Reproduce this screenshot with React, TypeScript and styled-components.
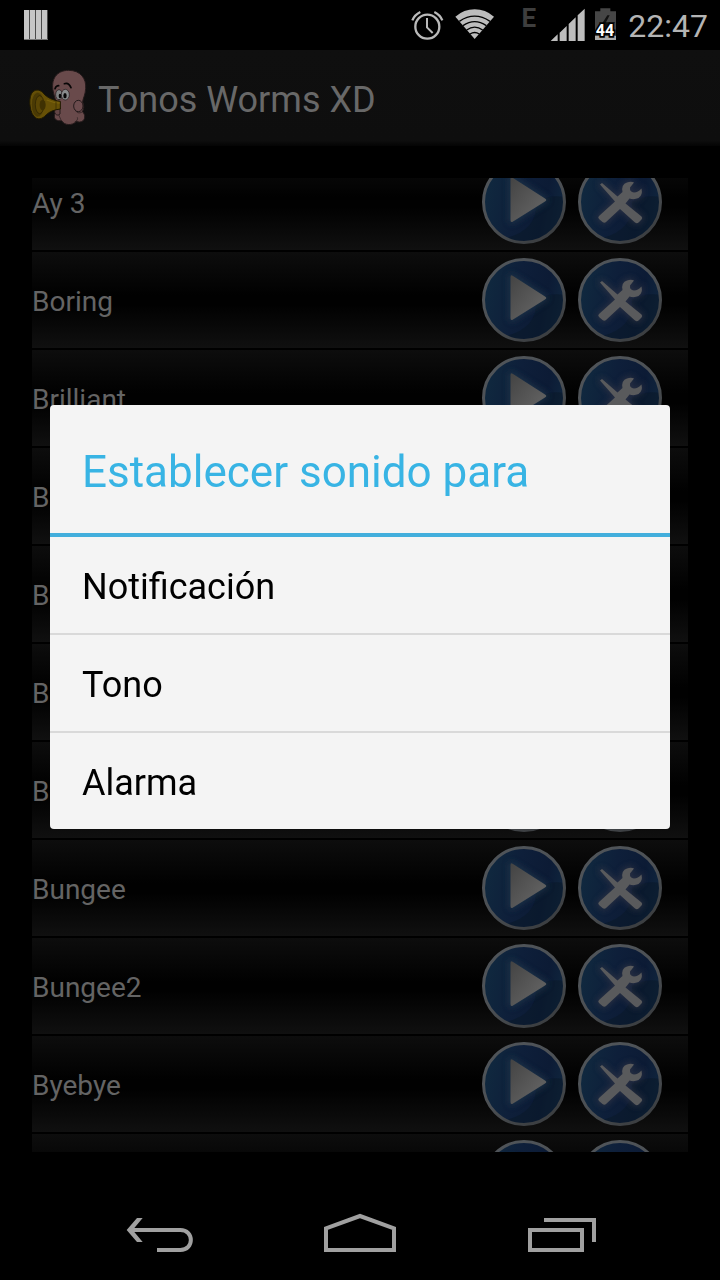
import React from "react";
import styled, { createGlobalStyle } from "styled-components";

const GlobalStyle = createGlobalStyle`
  *, *::before, *::after { box-sizing: border-box; }
  body { margin: 0; background: #000; }
  button { margin: 0; padding: 0; border: 0; background: none; font: inherit; color: inherit; cursor: pointer; }
  svg { display: block; }
`;

const Screen = styled.div`
  height: 100vh;
  display: flex;
  flex-direction: column;
  background: #000;
  font-family: Roboto, "Liberation Sans", sans-serif;
`;

const StatusBar = styled.header`
  height: 50px;
  flex: none;
  display: flex;
  gap: 10px;
  padding: 0 12px 0 24px;
  color: #b4b4b4;
`;

const Spacer = styled.div`
  flex: 1;
`;

const NetworkType = styled.span`
  width: 36px;
  padding-right: 4px;
  text-align: right;
  font-size: 26px;
  font-weight: 700;
  line-height: 36px;
  color: #3e3e3e;
`;

const Clock = styled.time`
  width: 82px;
  text-align: right;
  font-size: 32px;
  line-height: 52px;
`;

const ActionBar = styled.div`
  height: 96px;
  flex: none;
  display: flex;
  align-items: center;
  gap: 8px;
  padding: 0 26px;
  background: linear-gradient(#0f0f0f, #0e0e0e 94%, #040404);
`;

const AppTitle = styled.h1`
  margin: 0;
  padding-top: 4px;
  font-size: 36px;
  font-weight: 400;
  line-height: 48px;
  color: #686868;
`;

const Content = styled.main`
  flex: 1;
  min-height: 0;
  display: flex;
  padding: 32px;
`;

const ListViewport = styled.div`
  flex: 1;
  overflow: hidden;
`;

const SoundList = styled.ul`
  list-style: none;
  margin: -24px 0 0;
  padding: 0;
`;

const SoundRow = styled.li`
  height: 98px;
  display: flex;
  align-items: center;
  padding-right: 20px;
  border-bottom: 2px solid #000;
  background: linear-gradient(#0d0d0d, #010101 45%, #010101 55%, #101010);
`;

const SoundName = styled.span`
  flex: 1;
  padding-top: 4px;
  font-size: 28px;
  line-height: 36px;
  color: #646464;
`;

const RoundButton = styled.button`
  width: 96px;
  height: 96px;
`;

const DialogLayer = styled.div`
  position: fixed;
  inset: 50px 0 96px;
  display: flex;
  align-items: center;
  padding: 0 50px;
`;

const Dialog = styled.section`
  flex: 1;
  overflow: hidden;
  border-radius: 4px;
  background: #f4f4f4;
`;

const DialogTitle = styled.h2`
  margin: 0;
  padding: 36px 32px 30px;
  border-bottom: 4px solid #42aedc;
  font-size: 44px;
  font-weight: 400;
  line-height: 62px;
  color: #38b4e4;
`;

const Option = styled.button`
  display: block;
  width: 100%;
  padding: 26px 32px 22px;
  text-align: left;
  font-size: 36px;
  line-height: 48px;
  color: #000;

  & + & {
    border-top: 2px solid #d9d9d9;
  }
`;

const NavBar = styled.nav`
  height: 96px;
  flex: none;
  display: flex;
  padding: 0 60px;
`;

const NavButton = styled.button`
  flex: 1;
  display: flex;
  align-items: center;
  justify-content: center;
`;

const BarcodeIcon = () => (
  <svg width="24" height="50" viewBox="0 0 24 50" aria-hidden="true">
    {[0, 6, 12, 18].map((x) => (
      <g key={x}>
        <rect x={x} y="10" width="6" height="30" fill="#777" />
        <rect x={x} y="10" width="5" height="29" fill="#c6c6c6" />
        <rect x={x + 5} y="10" width="1" height="29" fill="#4a4a4a" />
      </g>
    ))}
  </svg>
);

const AlarmIcon = () => (
  <svg width="34" height="50" viewBox="33 0 102 150" fill="none" stroke="#b9b9b9" aria-hidden="true">
    <circle cx="82" cy="80" r="36" strokeWidth="7" />
    <path d="M81 54V82L98 99" strokeWidth="6" />
    <path d="M37 61Q44 44 61 36M103 36Q120 44 127 61" strokeWidth="7" />
  </svg>
);

const WifiIcon = () => (
  <svg width="39" height="50" viewBox="165 0 117 150" aria-hidden="true">
    <path d="M224 117L166 50Q192 28 224 28T282 50Z" fill="#bdbdbd" />
    <g fill="none" stroke="#000" strokeWidth="4">
      <path d="M178 64Q224 33 270 64" />
      <path d="M189 77Q224 53 259 77" />
      <path d="M200 90Q224 73 248 90" />
      <path d="M210 102Q224 93 238 102" />
    </g>
  </svg>
);

const SignalIcon = () => (
  <svg width="35" height="50" viewBox="451 0 105 150" fill="#bdbdbd" aria-hidden="true">
    <path d="M453 123L474 103V123ZM480 98L501 78V123H480ZM507 72L528 52V123H507ZM534 46L555 26V123H534Z" />
  </svg>
);

const BatteryIcon = () => (
  <svg width="21" height="50" viewBox="585 0 63 150" role="img" aria-label="44 %">
    <path d="M601 25H631V34H648V120H585V34H601Z" fill="#464646" />
    <path d="M585 108H648V120H585Z" fill="#a9a9a9" />
    <path d="M622 46L603 76H615L608 100L631 67H618L629 46Z" fill="#111" />
    <text
      x="615"
      y="108"
      textAnchor="middle"
      fontFamily="Roboto, sans-serif"
      fontWeight="700"
      fontSize="48"
      fill="#fff"
      stroke="#000"
      strokeWidth="10"
      paintOrder="stroke"
    >
      44
    </text>
  </svg>
);

const WormIcon = () => (
  <svg width="64" height="64" viewBox="18 18 192 192" aria-hidden="true">
    <g stroke="#241a1b" strokeWidth="3">
      <path
        d="M100 96C91 58 110 31 146 31C181 31 200 56 197 86C196 105 189 114 188 126C193 136 192 148 187 155C197 162 197 181 184 185C175 188 171 184 168 185C157 197 133 197 125 182C112 184 102 178 103 168C103 159 111 157 112 150C114 137 104 116 100 96Z"
        fill="#694a4b"
      />
      <ellipse cx="175" cy="138" rx="14" ry="17" fill="#6c4c4e" />
      <path d="M168 153C170 158 177 161 187 156M123 180C119 171 116 165 115 158M164 186C172 183 174 177 172 172" fill="none" strokeWidth="2" />
      <path d="M104 157C102 150 107 146 113 148L120 143V162C114 168 106 165 104 157Z" fill="#624546" />
    </g>
    <ellipse cx="117" cy="104" rx="10" ry="15" fill="#7f8283" stroke="#1d1718" strokeWidth="2" />
    <ellipse cx="136" cy="104" rx="12" ry="16" fill="#888b8c" stroke="#1d1718" strokeWidth="2" />
    <ellipse cx="120" cy="108" rx="4" ry="7" fill="#060606" />
    <ellipse cx="135" cy="107" rx="5" ry="8" fill="#060606" />
    <path d="M105 86Q108 77 116 77M133 71Q146 66 153 83" fill="none" stroke="#080606" strokeWidth="5" strokeLinecap="round" />
    <path d="M38 96C49 86 63 90 71 101C81 112 98 121 121 124V147C103 149 90 154 79 164C67 178 52 181 42 169C27 150 25 109 38 96Z" fill="#665006" stroke="#1f1900" strokeWidth="3" />
    <ellipse cx="53" cy="134" rx="19" ry="37" fill="#4a3a04" stroke="#65500a" strokeWidth="2" />
    <ellipse cx="59" cy="134" rx="13" ry="27" fill="#5a4605" stroke="#2a2101" strokeWidth="2" />
    <ellipse cx="68" cy="135" rx="9" ry="16" fill="#3f3102" />
    <path d="M80 120Q98 128 119 129" stroke="#7a620c" strokeWidth="4" fill="none" />
    <path d="M108 124V148" stroke="#312701" strokeWidth="2" />
  </svg>
);

const HiddenDefs = styled.svg`
  position: absolute;
`;

const IconDefs = () => (
  <HiddenDefs width="0" height="0" aria-hidden="true">
    <defs>
      <linearGradient id="disc" x1="0" y1="0.4" x2="1" y2="0.6">
        <stop offset="0" stopColor="#10293f" />
        <stop offset="0.4" stopColor="#0e1f3a" />
        <stop offset="0.75" stopColor="#0c1b35" />
        <stop offset="1" stopColor="#10273f" />
      </linearGradient>
      <linearGradient id="ring" x1="0" y1="0" x2="0.6" y2="1">
        <stop offset="0" stopColor="#50555a" />
        <stop offset="0.6" stopColor="#4c5054" />
        <stop offset="1" stopColor="#3c3f42" />
      </linearGradient>
      <linearGradient id="metal" x1="0" y1="0" x2="1" y2="1">
        <stop offset="0" stopColor="#434343" />
        <stop offset="0.7" stopColor="#5e5e5e" />
        <stop offset="1" stopColor="#5c5c5c" />
      </linearGradient>
      <filter id="glow" x="-40%" y="-40%" width="180%" height="180%">
        <feGaussianBlur stdDeviation="3" />
      </filter>
    </defs>
  </HiddenDefs>
);

const Disc = () => (
  <>
    <circle cx="48" cy="48" r="41" fill="url(#disc)" />
    <path d="M60 48Q74 40 88 43A41 41 0 0 1 30 84Q62 76 60 48Z" fill="#0a192a" opacity="0.6" />
    <circle cx="48" cy="48" r="40.500" fill="none" stroke="url(#ring)" strokeWidth="3" />
  </>
);

const PLAY = "M34.500 25Q34.500 22 37 24L69 44.500Q71.500 46 69 47.500L37 67.500Q34.500 69 34.500 66Z";
const TOOLS =
  "M28 30.500L30 29L45.500 42.500L50.500 38Q49 30.500 55 28.500Q59 27 62 28.500L58 33.500Q57.500 38 62 38.500Q66 38.500 69.500 34.500Q71 41 66.500 44Q62 46 57.500 44.500L53.500 49.500L69.500 62.500Q71 64 69.500 65.500L66.500 68.500Q65 70 63 68.500L48 55L34 68Q32.500 69.500 30.500 68L27 65Q25.500 63.500 27 62L43 47.500Z";

const PlayIcon = () => (
  <svg width="96" height="96" viewBox="0 0 96 96" aria-hidden="true">
    <Disc />
    <path d={PLAY} fill="#23384c" stroke="#23384c" strokeWidth="4" opacity="0.7" filter="url(#glow)" />
    <path d={PLAY} fill="url(#metal)" />
  </svg>
);

const ToolsIcon = () => (
  <svg width="96" height="96" viewBox="0 0 96 96" aria-hidden="true">
    <Disc />
    <path d={TOOLS} fill="#3a3b48" stroke="#3a3b48" strokeWidth="3" opacity="0.6" filter="url(#glow)" />
    <path d={TOOLS} fill="#595a5c" />
  </svg>
);

const BackIcon = () => (
  <svg width="72" height="48" viewBox="72 54 216 144" fill="none" stroke="#a0a0a0" strokeWidth="12" aria-hidden="true">
    <path d="M92 120H241C283 120 283 180 241 180H171" />
    <path d="M80 120L111 84H128L98 120L128 156H111Z" fill="#a0a0a0" stroke="none" />
  </svg>
);

const HomeIcon = () => (
  <svg width="72" height="48" viewBox="672 54 216 144" fill="none" stroke="#a0a0a0" strokeWidth="12" aria-hidden="true">
    <path d="M678 180V115L780 78L882 115V180Z" />
  </svg>
);

const RecentIcon = () => (
  <svg width="72" height="48" viewBox="1272 54 216 144" fill="none" stroke="#a0a0a0" strokeWidth="12" aria-hidden="true">
    <path d="M1290 120H1446V180H1290ZM1332 90H1482V156" />
  </svg>
);

const sounds = [
  { id: 1, name: "Ay 3" },
  { id: 2, name: "Boring" },
  { id: 3, name: "Brilliant" },
  { id: 4, name: "B" },
  { id: 5, name: "B" },
  { id: 6, name: "B" },
  { id: 7, name: "B" },
  { id: 8, name: "Bungee" },
  { id: 9, name: "Bungee2" },
  { id: 10, name: "Byebye" },
  { id: 11, name: "" },
];

const options = ["Notificación", "Tono", "Alarma"];

export default function App() {
  return (
    <Screen>
      <GlobalStyle />
      <IconDefs />
      <StatusBar>
        <BarcodeIcon />
        <Spacer />
        <AlarmIcon />
        <WifiIcon />
        <NetworkType>E</NetworkType>
        <SignalIcon />
        <BatteryIcon />
        <Clock>22:47</Clock>
      </StatusBar>
      <ActionBar>
        <WormIcon />
        <AppTitle>Tonos Worms XD</AppTitle>
      </ActionBar>
      <Content>
        <ListViewport>
          <SoundList>
            {sounds.map(({ id, name }) => (
              <SoundRow key={id}>
                <SoundName>{name}</SoundName>
                <RoundButton type="button" aria-label={`Reproducir ${name}`}>
                  <PlayIcon />
                </RoundButton>
                <RoundButton type="button" aria-label={`Establecer ${name}`}>
                  <ToolsIcon />
                </RoundButton>
              </SoundRow>
            ))}
          </SoundList>
        </ListViewport>
      </Content>
      <NavBar>
        <NavButton type="button" aria-label="Atrás">
          <BackIcon />
        </NavButton>
        <NavButton type="button" aria-label="Inicio">
          <HomeIcon />
        </NavButton>
        <NavButton type="button" aria-label="Recientes">
          <RecentIcon />
        </NavButton>
      </NavBar>
      <DialogLayer>
        <Dialog role="dialog" aria-modal="true" aria-labelledby="dialog-title">
          <DialogTitle id="dialog-title">Establecer sonido para</DialogTitle>
          {options.map((label) => (
            <Option key={label} type="button">
              {label}
            </Option>
          ))}
        </Dialog>
      </DialogLayer>
    </Screen>
  );
}
